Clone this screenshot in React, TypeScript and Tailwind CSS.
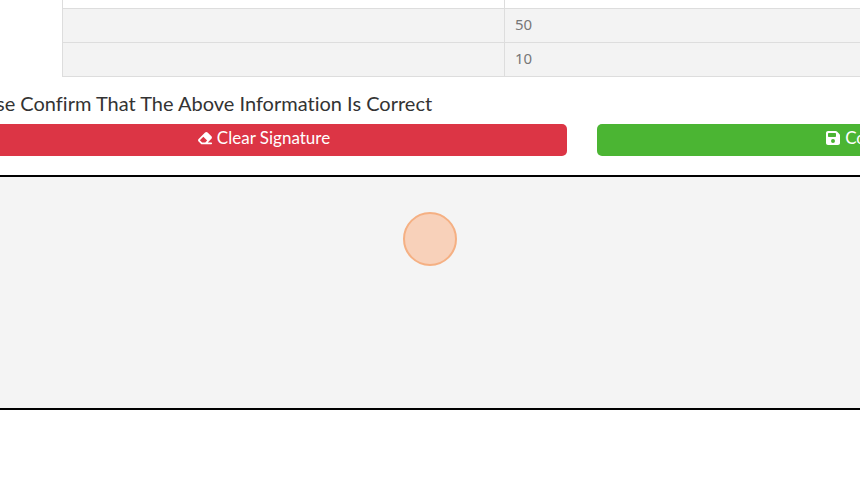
import React from "react";
import {FaEraser, FaFloppyDisk} from "react-icons/fa6";

const rows = [
  {id: "row_1", label: "", value: "50"},
  {id: "row_2", label: "", value: "10"},
];

const SummaryTable = () => {
  return (
    <div className="pl-[62px]">
      <table className="w-full table-fixed border-collapse text-sm text-[#777]">
        <tbody>
          <tr className="h-2 bg-white">
            <td className="w-[442px] border-l border-[#ddd] p-0" />
            <td className="border-l border-[#ddd] p-0" />
          </tr>
          {rows.map((row) => (
            <tr key={row.id} className="h-[34px] bg-[#f3f3f3]">
              <td className="border-y border-l border-[#ddd] px-2.5 py-0">
                {row.label}
              </td>
              <td className="border-y border-l border-[#ddd] px-2.5 pt-0 pb-0.5 font-['Noto_Sans',sans-serif] text-[15px] leading-5">
                {row.value}
              </td>
            </tr>
          ))}
        </tbody>
      </table>
    </div>
  );
};

const SignaturePad = () => {
  return (
    <div className="relative mt-[19px] h-[235px] border-y-2 border-black bg-[#f4f4f4]">
      <canvas className="block h-full w-full" aria-label="Signature" />
      <span className="absolute top-[35px] left-1/2 size-[54px] -translate-x-1/2 rounded-full border-2 border-[#f5b083] bg-[#f8d1ba]" />
    </div>
  );
};

const App = () => {
  return (
    <main className="overflow-hidden bg-white font-['Lato',sans-serif] [font-variant-ligatures:none]">
      <SummaryTable />

      <h4 className="mt-3 -ml-1 text-xl leading-7 whitespace-nowrap text-[#333]">
        se Confirm That The Above Information Is Correct
      </h4>

      <div className="mt-[7px] flex gap-[30px] text-[17px] leading-6 text-white">
        <button
          type="button"
          className="flex h-8 w-[567px] shrink-0 items-center justify-center gap-1 rounded-r-[5px] bg-[#dc3545] pr-10 pb-1"
        >
          <FaEraser className="size-4" />
          Clear Signature
        </button>
        <button
          type="button"
          className="-mr-1.5 flex h-8 flex-1 items-center justify-end gap-1 rounded-l-[5px] bg-[#4bb533] pb-1"
        >
          <FaFloppyDisk className="size-4" />
          Co
        </button>
      </div>

      <SignaturePad />
    </main>
  );
};

export default App;
